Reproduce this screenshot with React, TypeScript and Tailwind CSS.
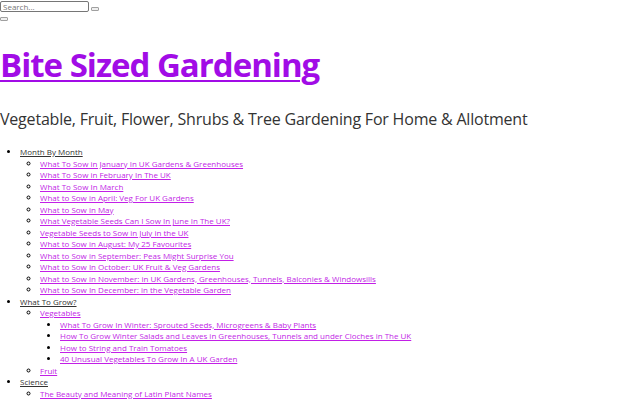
const font = { fontFamily: '"Open Sans", sans-serif' };

type Item = { label: string; children?: Item[] };

const menu: Item[] = [
  {
    label: 'Month By Month',
    children: [
      { label: 'What To Sow in January In UK Gardens & Greenhouses' },
      { label: 'What To Sow in February In The UK' },
      { label: 'What To Sow In March' },
      { label: 'What to Sow in April: Veg For UK Gardens' },
      { label: 'What to Sow in May' },
      { label: 'What Vegetable Seeds Can I Sow In June In The UK?' },
      { label: 'Vegetable Seeds to Sow in July in the UK' },
      { label: 'What to Sow in August: My 25 Favourites' },
      { label: 'What to Sow in September: Peas Might Surprise You' },
      { label: 'What to Sow In October: UK Fruit & Veg Gardens' },
      { label: 'What to Sow in November: in UK Gardens, Greenhouses, Tunnels, Balconies & Windowsills' },
      { label: 'What to Sow In December: in the Vegetable Garden' },
    ],
  },
  {
    label: 'What To Grow?',
    children: [
      {
        label: 'Vegetables',
        children: [
          { label: 'What To Grow In Winter: Sprouted Seeds, Microgreens & Baby Plants' },
          { label: 'How To Grow Winter Salads and Leaves in Greenhouses, Tunnels and under Cloches in The UK' },
          { label: 'How to String and Train Tomatoes' },
          { label: '40 Unusual Vegetables To Grow In A UK Garden' },
        ],
      },
      { label: 'Fruit' },
    ],
  },
  {
    label: 'Science',
    children: [{ label: 'The Beauty and Meaning of Latin Plant Names' }],
  },
];

function MenuList({ items, depth }: { items: Item[]; depth: number }) {
  const bullet = depth === 1 ? 'list-[circle]' : 'list-disc';
  return (
    <ul className={`${bullet} pl-5`}>
      {items.map((it) => (
        <li key={it.label}>
          <a
            href="#"
            className={depth === 0 ? 'text-[#333333] underline' : 'text-[#c21fe6] underline'}
          >
            {it.label}
          </a>
          {it.children && <MenuList items={it.children} depth={depth + 1} />}
        </li>
      ))}
    </ul>
  );
}

export default function App() {
  return (
    <div className="w-[640px] h-[400px] overflow-hidden bg-white" style={font}>
      <form className="flex items-end gap-[2px] pt-px">
        <input
          placeholder="Search..."
          className="w-[89px] h-[11px] border border-[#767676] rounded-[2px] px-[2px] text-[8px] leading-[9px] text-[#333] placeholder:text-[#757575]"
        />
        <button className="w-[8px] h-[4px] border border-[#a0a0a0] bg-[#efefef] rounded-[1px] mb-px" />
      </form>
      <button className="block mt-[5px] w-[8px] h-[4px] border border-[#a0a0a0] bg-[#efefef] rounded-[1px]" />
      <h1 className="mt-[22px] text-[33px] leading-[43px] font-bold tracking-[-1px]">
        <a href="#" className="text-[#a10ce6] underline decoration-[2px] underline-offset-[3px]">
          Bite Sized Gardening
        </a>
      </h1>
      <p className="mt-[22px] text-[16px] leading-[22px] tracking-[-0.2px] text-[#333333]">
        Vegetable, Fruit, Flower, Shrubs &amp; Tree Gardening For Home &amp; Allotment
      </p>
      <nav className="mt-[16px] text-[8px] leading-[11.5px]">
        <MenuList items={menu} depth={0} />
      </nav>
    </div>
  );
}
